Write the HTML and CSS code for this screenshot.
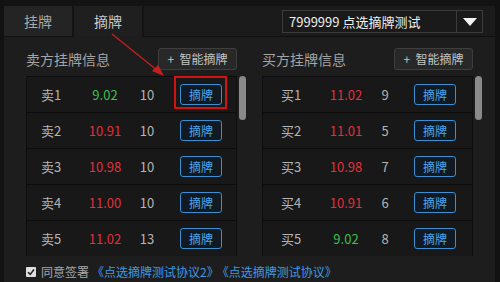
FILE: index.html
```html
<!DOCTYPE html>
<html lang="zh">
<head>
    <meta charset="UTF-8">
    <meta name="viewport" content="width=device-width, initial-scale=1.0">
    <title>摘牌</title>
    <link rel="stylesheet" href="styles.css">
</head>
<body>
    <div class="container">
        <div class="topbar">
            <div class="tab">挂牌</div>
            <div class="tab active">摘牌</div>
            <div class="filler">
                <div class="select">
                    <span class="select-text">7999999 点选摘牌测试</span>
                    <span class="select-arrow"></span>
                </div>
            </div>
        </div>

        <div class="main">
            <!-- 卖方 -->
            <div class="section">
                <div class="section-head">
                    <span class="section-title">卖方挂牌信息</span>
                    <button class="smart-btn">+&nbsp; 智能摘牌</button>
                </div>
                <div class="table-wrap">
                    <div class="table table-sell">
                        <div class="row"><span>卖1</span><span class="green">9.02</span><span>10</span><span class="cell-btn"><button class="pick">摘牌</button><span class="highlight"></span></span></div>
                        <div class="row"><span>卖2</span><span class="red">10.91</span><span>10</span><span class="cell-btn"><button class="pick">摘牌</button></span></div>
                        <div class="row"><span>卖3</span><span class="red">10.98</span><span>10</span><span class="cell-btn"><button class="pick">摘牌</button></span></div>
                        <div class="row"><span>卖4</span><span class="red">11.00</span><span>10</span><span class="cell-btn"><button class="pick">摘牌</button></span></div>
                        <div class="row"><span>卖5</span><span class="red">11.02</span><span>13</span><span class="cell-btn"><button class="pick">摘牌</button></span></div>
                    </div>
                    <div class="scroll"><div class="thumb"></div></div>
                </div>
            </div>

            <!-- 买方 -->
            <div class="section">
                <div class="section-head">
                    <span class="section-title">买方挂牌信息</span>
                    <button class="smart-btn">+&nbsp; 智能摘牌</button>
                </div>
                <div class="table-wrap">
                    <div class="table table-buy">
                        <div class="row"><span>买1</span><span class="red">11.02</span><span>9</span><span class="cell-btn"><button class="pick">摘牌</button></span></div>
                        <div class="row"><span>买2</span><span class="red">11.01</span><span>5</span><span class="cell-btn"><button class="pick">摘牌</button></span></div>
                        <div class="row"><span>买3</span><span class="red">10.98</span><span>7</span><span class="cell-btn"><button class="pick">摘牌</button></span></div>
                        <div class="row"><span>买4</span><span class="red">10.91</span><span>6</span><span class="cell-btn"><button class="pick">摘牌</button></span></div>
                        <div class="row"><span>买5</span><span class="green">9.02</span><span>8</span><span class="cell-btn"><button class="pick">摘牌</button></span></div>
                    </div>
                    <div class="scroll"><div class="thumb"></div></div>
                </div>
            </div>
        </div>

        <div class="agree">
            <span class="check">
                <svg width="8" height="8" viewBox="0 0 8 8"><path d="M1 4.2 L3.2 6.4 L7 1.6" fill="none" stroke="#222" stroke-width="1.6"/></svg>
            </span>
            <span class="agree-text">同意签署</span>
            <a class="link">《点选摘牌测试协议2》</a><a class="link">《点选摘牌测试协议》</a>
        </div>

        <!-- 标注箭头 -->
        <svg class="arrow" width="500" height="282" viewBox="0 0 500 282">
            <line x1="112" y1="34" x2="158" y2="71" stroke="#c02020" stroke-width="1.4"/>
            <path d="M164 76 L152 71 L158 65 Z" fill="#c02020"/>
        </svg>
    </div>
</body>
</html>
```

FILE: styles.css
```css
/* 摘牌界面 */
body {
    margin: 0;
    background-color: #121212;
    font-family: "Noto Sans CJK SC", "Noto Sans", sans-serif;
    color: #b0b0b0;
}

.container {
    position: relative;
    width: 491px;
    height: 282px;
    margin-left: 4px;
    background-color: #1d1d1d;
}

.topbar {
    display: flex;
    height: 37px;
    padding-top: 6px;
    box-sizing: border-box;
    background-color: #131313;
}

.tab {
    width: 68px;
    margin-right: 2px;
    background-color: #242424;
    color: #a8a8a8;
    font-size: 14px;
    line-height: 31px;
    text-align: center;
    border-bottom: 1px solid #101010;
}

.tab.active {
    background-color: #1f1f1f;
    color: #c8c8c8;
    border-bottom: 1px solid #1d1d1d;
}

.filler {
    flex: 1;
    display: flex;
    justify-content: flex-end;
    align-items: flex-start;
    padding-top: 4px;
    padding-right: 12px;
    background-color: #1b1b1b;
    border-bottom: 1px solid #101010;
}

.select {
    display: flex;
    width: 201px;
    height: 23px;
    box-sizing: border-box;
    border: 1px solid #3c3c3c;
    background-color: #1a1a1a;
}

.select-text {
    flex: 1;
    padding-left: 6px;
    color: #f0f0f0;
    font-size: 13px;
    line-height: 21px;
}

.select-arrow {
    width: 25px;
    border-left: 1px solid #3c3c3c;
    position: relative;
}

.select-arrow::after {
    content: "";
    position: absolute;
    left: 6px;
    top: 7px;
    border-left: 7px solid transparent;
    border-right: 7px solid transparent;
    border-top: 8px solid #f4f4f4;
}

.main {
    display: flex;
    gap: 16px;
    padding: 4px 0 0 22px;
}

.section {
    width: 220px;
}

.section-head {
    display: flex;
    justify-content: space-between;
    align-items: center;
    height: 35px;
    padding-right: 9px;
}

.section-title {
    font-size: 14px;
    color: #a4a4a4;
}

.smart-btn {
    width: 79px;
    height: 22px;
    padding: 0;
    border: 1px solid #3e3e3e;
    border-radius: 3px;
    background-color: #282828;
    color: #c4c4c4;
    font-family: inherit;
    font-size: 12px;
}

.table-wrap {
    display: flex;
    height: 180px;
}

.table {
    width: 211px;
    background-color: #181818;
    border-left: 1px solid #0e0e0e;
    border-right: 1px solid #0e0e0e;
    box-sizing: border-box;
}

.row {
    display: grid;
    height: 36px;
    box-sizing: border-box;
    align-items: center;
    border-top: 1px solid #0c0c0c;
    font-size: 13px;
    color: #b4b4b4;
}

.table-sell .row {
    grid-template-columns: 48px 60px 24px 1fr;
}

.table-buy .row {
    grid-template-columns: 56px 54px 24px 1fr;
}

.row span {
    text-align: center;
}

.row .cell-btn {
    position: relative;
    text-align: left;
}

.table-sell .pick {
    margin-left: 21px;
}

.table-buy .pick {
    margin-left: 17px;
}

.red {
    color: #e0303a;
}

.green {
    color: #3cc04a;
}

.pick {
    width: 42px;
    height: 21px;
    padding: 0;
    border: 1px solid #3b8fd0;
    border-radius: 3px;
    background-color: #111a22;
    color: #4aa6ee;
    font-family: inherit;
    font-size: 12px;
    vertical-align: middle;
}

.highlight {
    position: absolute;
    left: 15px;
    top: -8px;
    width: 53px;
    height: 33px;
    box-sizing: border-box;
    border: 2px solid #d01414;
}

.scroll {
    width: 9px;
    padding-left: 2px;
    box-sizing: border-box;
}

.thumb {
    width: 7px;
    height: 44px;
    border-radius: 4px;
    background-color: #8a8a8a;
}

.agree {
    display: flex;
    align-items: center;
    gap: 5px;
    padding: 7px 0 0 22px;
    font-size: 12px;
}

.check {
    display: flex;
    align-items: center;
    justify-content: center;
    width: 10px;
    height: 10px;
    background-color: #e0e0e0;
    border-radius: 1px;
}

.agree-text {
    color: #a8a8a8;
}

.link {
    color: #3d9be6;
    margin-left: -2px;
}

.link + .link {
    margin-left: -7px;
}

.arrow {
    position: absolute;
    left: -4px;
    top: 0;
    pointer-events: none;
}
```
